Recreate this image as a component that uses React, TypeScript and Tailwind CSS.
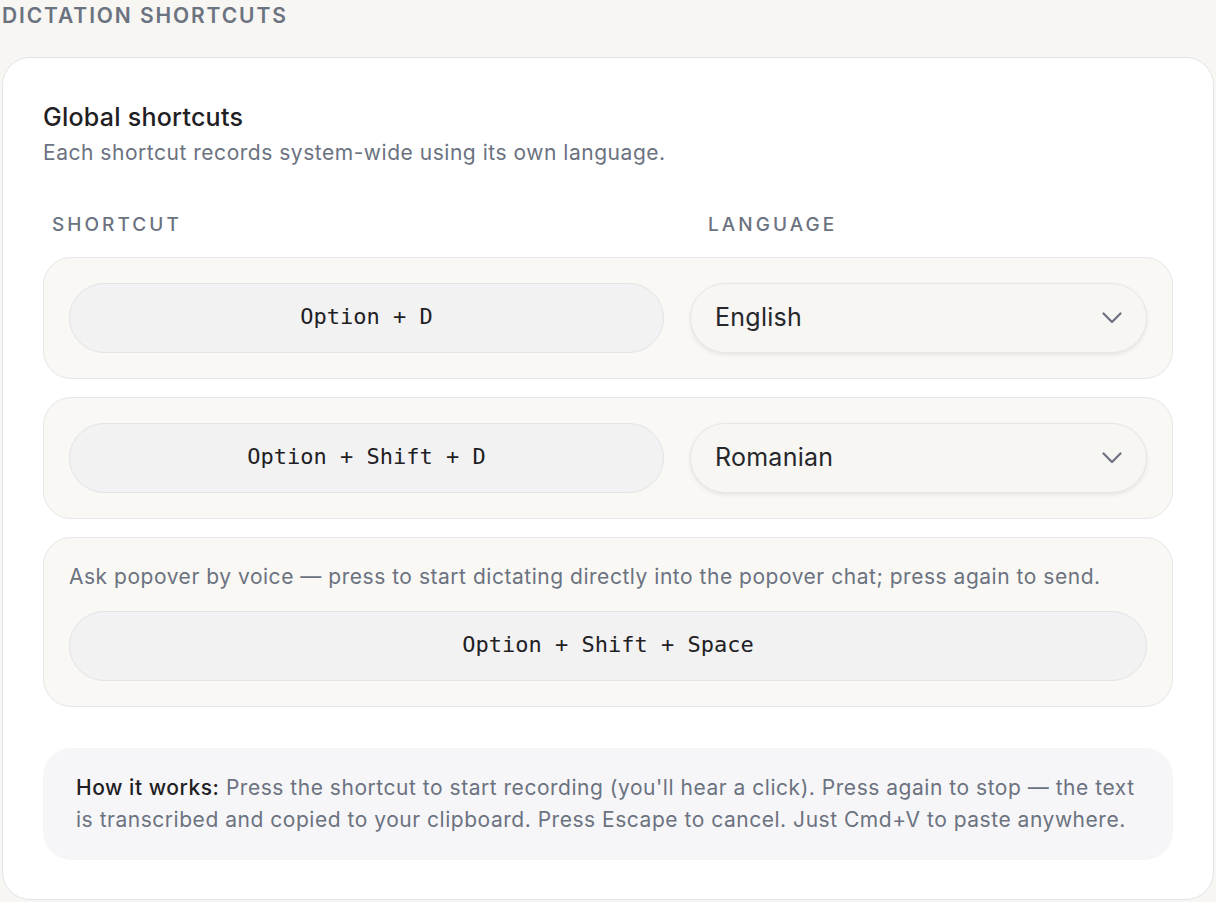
import React from "react";

function Chevron() {
  return (
    <svg width="20" height="12" viewBox="0 0 20 12" fill="none" className="shrink-0">
      <path d="M1.5 1.5 L10 10 L18.5 1.5" stroke="#6b7280" strokeWidth="2.2" strokeLinecap="round" strokeLinejoin="round" />
    </svg>
  );
}

function KeyPill({ children }: { children: React.ReactNode }) {
  return (
    <div className="h-[70px] rounded-full bg-[#f2f2f3] border border-[#e4e4e7] flex items-center justify-center pb-[3px] font-['DejaVu_Sans_Mono',monospace] text-[22px] text-[#1f2023]">
      {children}
    </div>
  );
}

function Select({ value }: { value: string }) {
  return (
    <div className="h-[70px] rounded-full bg-[#f7f6f3] border border-[#e6e6e8] shadow-[0_2px_4px_rgba(0,0,0,0.08)] flex items-center justify-between pl-[24px] pr-[24px]">
      <span className="text-[25px] tracking-[0.01em] text-[#26272b]">{value}</span>
      <Chevron />
    </div>
  );
}

function Row({ shortcut, lang }: { shortcut: string; lang: string }) {
  return (
    <div className="rounded-[28px] bg-[#f9f8f5] border border-[#e6e6e8] p-[25px] grid grid-cols-[595fr_457fr] gap-[26px]">
      <KeyPill>{shortcut}</KeyPill>
      <Select value={lang} />
    </div>
  );
}

export default function App() {
  return (
    <div className="min-h-[902px] bg-[#f7f6f3] px-[2px] pt-[2px] font-['Inter',sans-serif]">
      <div className="text-[21px] leading-[28px] font-semibold tracking-[0.09em] text-[#6b7280]">
        DICTATION SHORTCUTS
      </div>
      <div className="mt-[27px] bg-white border border-[#e4e4e7] rounded-[28px] px-[40px] pt-[44px] pb-[39px]">
        <div className="text-[25px] leading-[30px] font-medium tracking-[0.01em] text-[#1f2023]">Global shortcuts</div>
        <div className="mt-[7px] text-[21px] leading-[28px] tracking-[0.025em] text-[#6b7280]">
          Each shortcut records system-wide using its own language.
        </div>

        <div className="mt-[46px] grid grid-cols-[656px_1fr] pl-[9px] text-[19px] leading-[24px] font-medium tracking-[0.16em] text-[#6b7280]">
          <div>SHORTCUT</div>
          <div>LANGUAGE</div>
        </div>

        <div className="mt-[20px] flex flex-col gap-[18px]">
          <Row shortcut="Option + D" lang="English" />
          <Row shortcut="Option + Shift + D" lang="Romanian" />
          <div className="rounded-[28px] bg-[#f9f8f5] border border-[#e6e6e8] p-[25px] flex flex-col gap-[20px]">
            <div className="text-[21px] leading-[28px] tracking-[0.025em] text-[#6b7280]">
              Ask popover by voice — press to start dictating directly into the popover chat; press again to send.
            </div>
            <KeyPill>Option + Shift + Space</KeyPill>
          </div>
        </div>

        <div className="mt-[41px] rounded-[28px] bg-[#f6f6f8] px-[33px] pt-[24px] pb-[24px] text-[21px] leading-[32px] tracking-[0.025em] text-[#6b7280]">
          <span className="font-medium text-[#1f2023]">How it works:</span> Press the shortcut to start recording (you'll hear a click). Press again to stop — the text is transcribed and copied to your clipboard. Press Escape to cancel. Just Cmd+V to paste anywhere.
        </div>
      </div>
    </div>
  );
}
